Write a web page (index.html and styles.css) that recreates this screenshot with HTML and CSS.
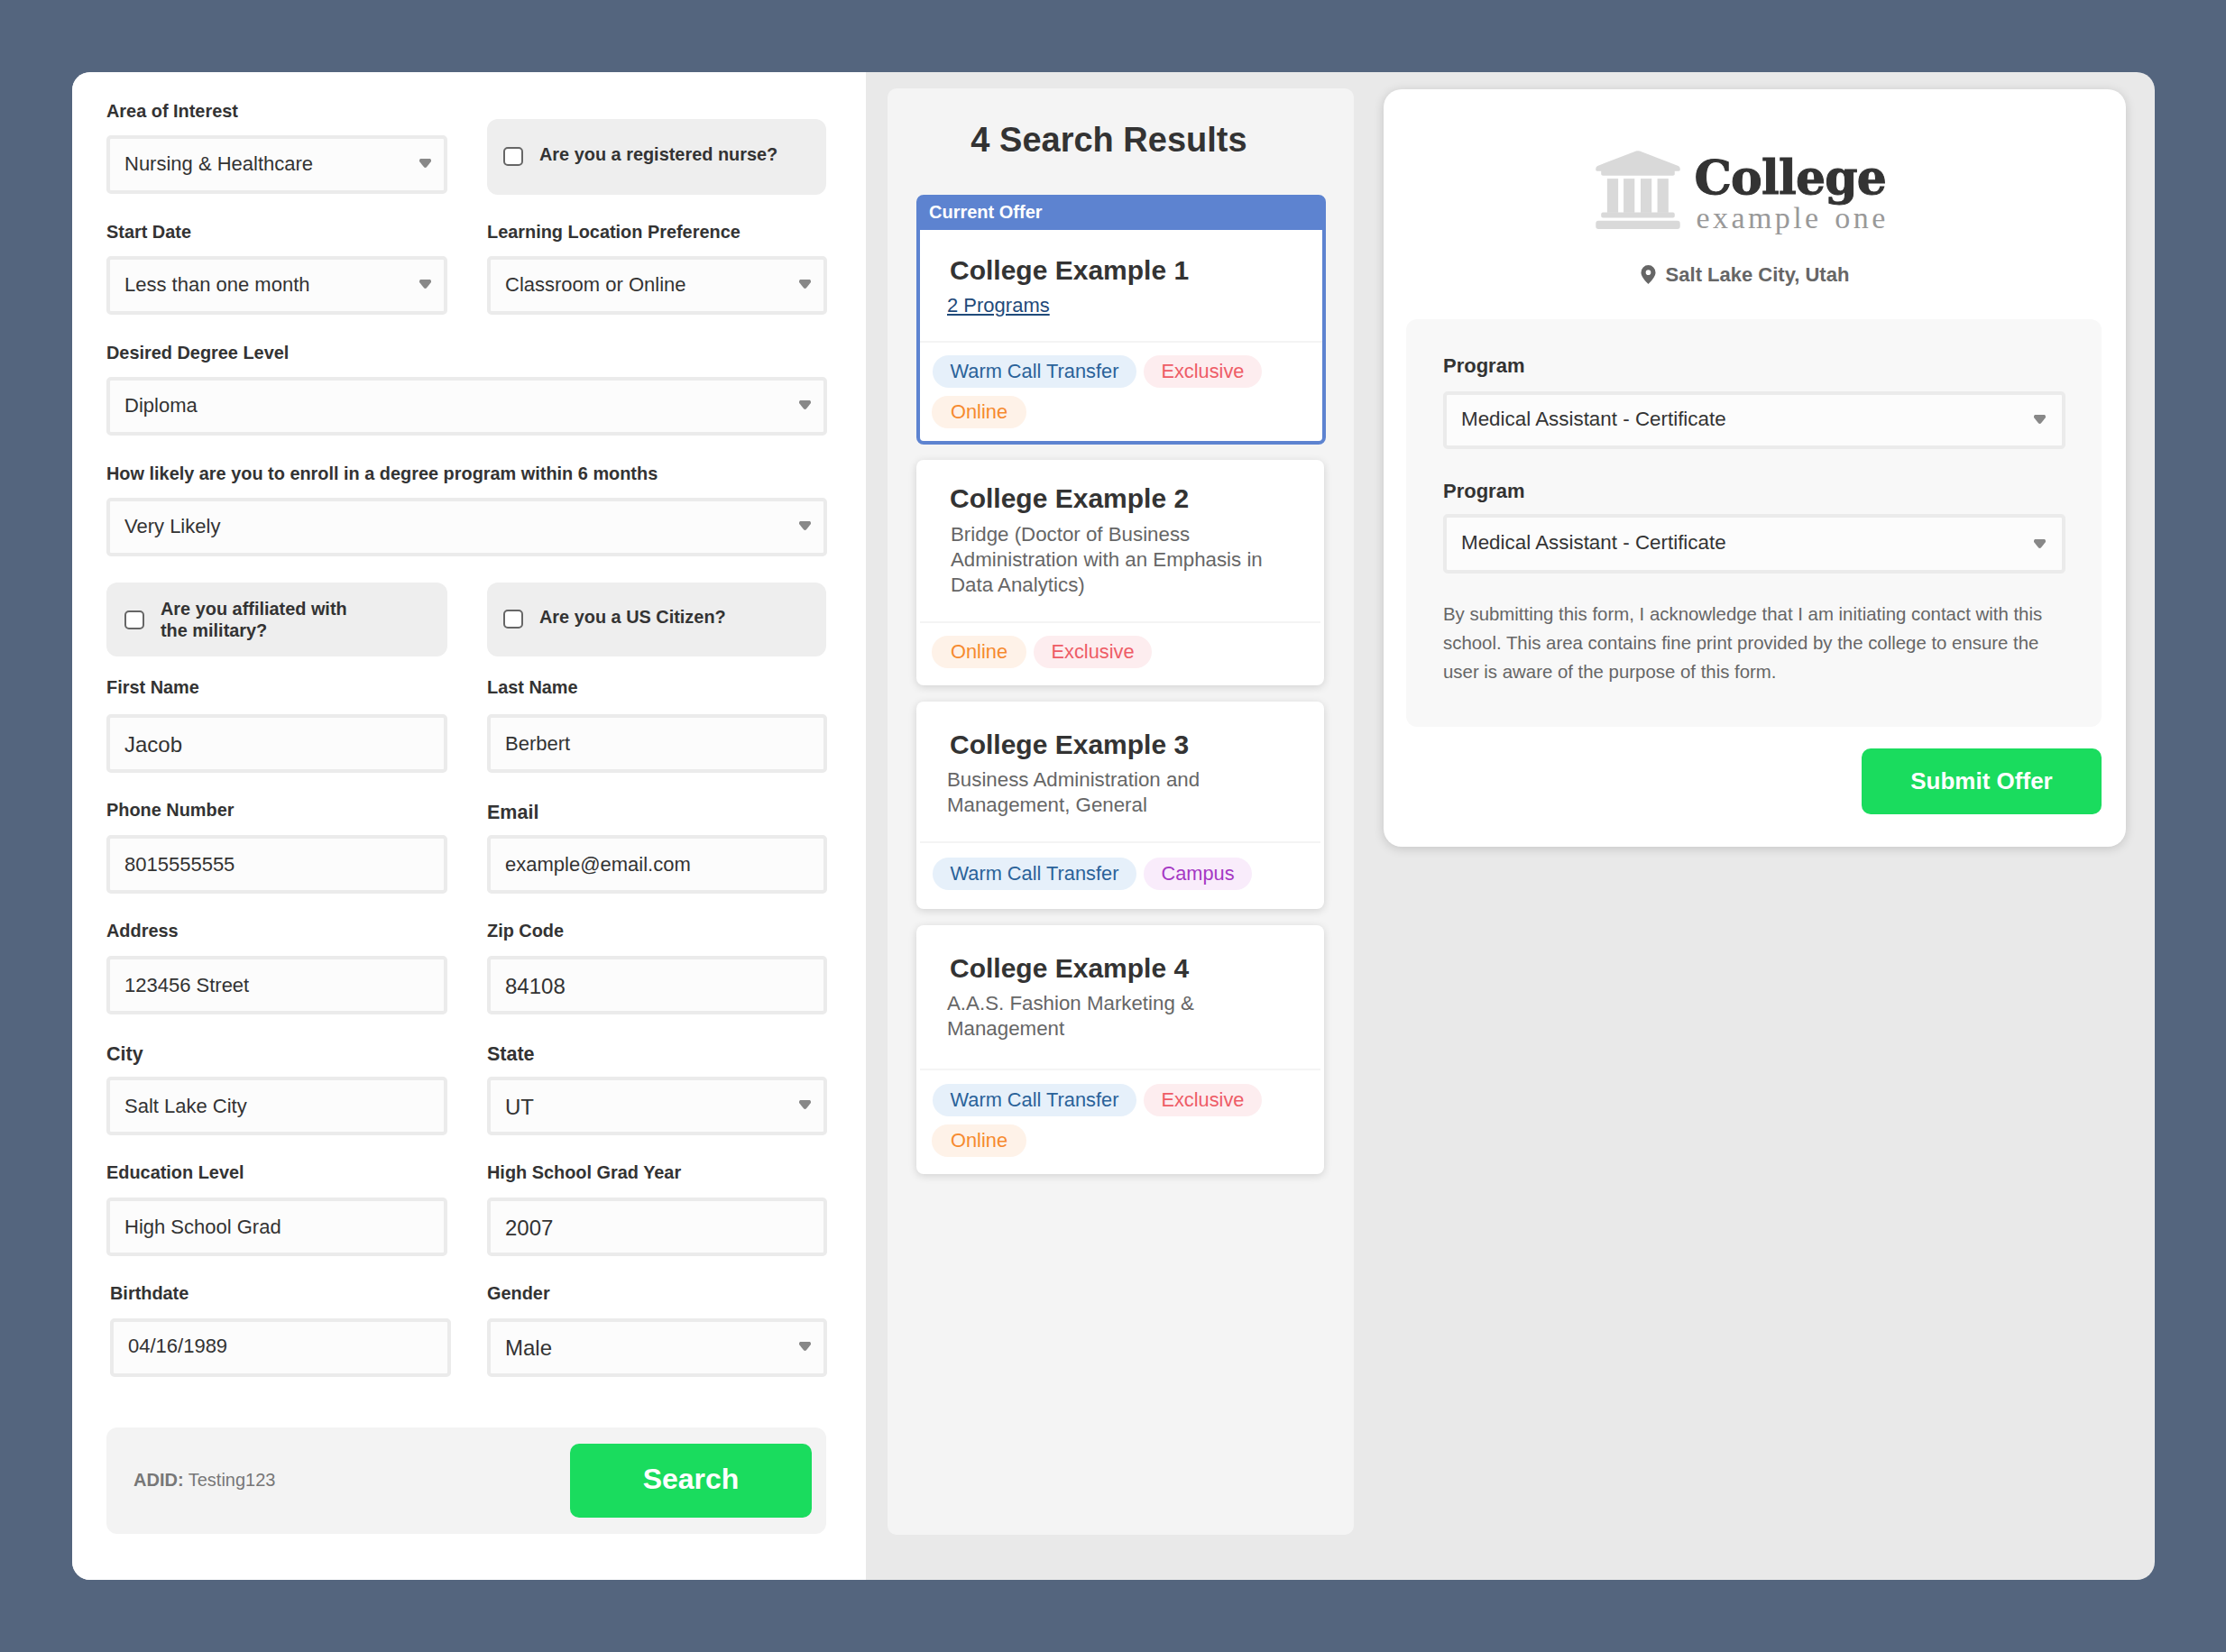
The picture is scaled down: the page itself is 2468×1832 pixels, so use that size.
FILE: index.html
```html
<!DOCTYPE html>
<html lang="en">
<head>
    <meta charset="UTF-8">
    <title>Search Results</title>
    <link rel="stylesheet" href="styles.css">
</head>
<body>
    <div class="panel">
        <form class="leadForm">
            <div class="formGrid">
                <div class="field topRow">
                    <label>Area of Interest</label>
                    <div class="selectWrap"><select><option>Nursing &amp; Healthcare</option></select></div>
                </div>
                <div class="checkBox checkRight checkBoxTop singleLine">
                    <input type="checkbox" id="nurse">
                    <label for="nurse">Are you a registered nurse?</label>
                </div>

                <div class="field topRow">
                    <label>Start Date</label>
                    <div class="selectWrap"><select><option>Less than one month</option></select></div>
                </div>
                <div class="field topRow">
                    <label>Learning Location Preference</label>
                    <div class="selectWrap"><select><option>Classroom or Online</option></select></div>
                </div>

                <div class="field topRow wide">
                    <label>Desired Degree Level</label>
                    <div class="selectWrap"><select><option>Diploma</option></select></div>
                </div>

                <div class="field topRow wide">
                    <label>How likely are you to enroll in a degree program within 6 months</label>
                    <div class="selectWrap"><select><option>Very Likely</option></select></div>
                </div>

                <div class="checkBox checkLeft">
                    <input type="checkbox" id="military">
                    <label for="military">Are you affiliated with<br>the military?</label>
                </div>
                <div class="checkBox checkRight singleLine">
                    <input type="checkbox" id="citizen">
                    <label for="citizen">Are you a US Citizen?</label>
                </div>

                <div class="field nameRow">
                    <label>First Name</label>
                    <input type="text" class="large" value="Jacob">
                </div>
                <div class="field nameRow">
                    <label>Last Name</label>
                    <input type="text" value="Berbert">
                </div>

                <div class="field">
                    <label>Phone Number</label>
                    <input type="text" value="8015555555">
                </div>
                <div class="field">
                    <label class="bigLabel">Email</label>
                    <input type="text" value="example@email.com">
                </div>

                <div class="field">
                    <label>Address</label>
                    <input type="text" value="123456 Street">
                </div>
                <div class="field">
                    <label>Zip Code</label>
                    <input type="text" class="large" value="84108">
                </div>

                <div class="field">
                    <label class="bigLabel">City</label>
                    <input type="text" value="Salt Lake City">
                </div>
                <div class="field">
                    <label class="bigLabel">State</label>
                    <div class="selectWrap"><select class="large"><option>UT</option></select></div>
                </div>

                <div class="field">
                    <label>Education Level</label>
                    <input type="text" value="High School Grad">
                </div>
                <div class="field">
                    <label>High School Grad Year</label>
                    <input type="text" class="large" value="2007">
                </div>

                <div class="field birthdate">
                    <label>Birthdate</label>
                    <input type="text" value="04/16/1989">
                </div>
                <div class="field genderField">
                    <label>Gender</label>
                    <div class="selectWrap"><select class="large"><option>Male</option></select></div>
                </div>
            </div>

            <div class="searchBar">
                <p class="adid"><b>ADID:</b> Testing123</p>
                <button type="button" class="greenBtn searchBtn">Search</button>
            </div>
        </form>

        <div class="resultsArea">
            <div class="results">
                <h2>4 Search Results</h2>

                <div class="card current">
                    <div class="currentBar">Current Offer</div>
                    <div class="cardBody">
                        <h3>College Example 1</h3>
                        <a href="#" class="programs">2 Programs</a>
                    </div>
                    <div class="tags">
                        <span class="tag blue">Warm Call Transfer</span>
                        <span class="tag red">Exclusive</span>
                        <span class="tag orange">Online</span>
                    </div>
                </div>

                <div class="card">
                    <div class="cardBody">
                        <h3>College Example 2</h3>
                        <p>Bridge (Doctor of Business Administration with an Emphasis in Data Analytics)</p>
                    </div>
                    <div class="tags">
                        <span class="tag orange">Online</span>
                        <span class="tag red">Exclusive</span>
                    </div>
                </div>

                <div class="card cardTall">
                    <div class="cardBody">
                        <h3>College Example 3</h3>
                        <p>Business Administration and<br>Management, General</p>
                    </div>
                    <div class="tags">
                        <span class="tag blue">Warm Call Transfer</span>
                        <span class="tag purple">Campus</span>
                    </div>
                </div>

                <div class="card cardTall">
                    <div class="cardBody">
                        <h3>College Example 4</h3>
                        <p>A.A.S. Fashion Marketing &amp;<br>Management</p>
                    </div>
                    <div class="tags">
                        <span class="tag blue">Warm Call Transfer</span>
                        <span class="tag red">Exclusive</span>
                        <span class="tag orange">Online</span>
                    </div>
                </div>
            </div>

            <div class="offer">
                <div class="logo">
                    <svg class="logoIcon" viewBox="0 0 94 87.500" width="94" height="87">
                        <path d="M45 .5 Q47 0 49 .5 L92 17 Q94 18 94 20 L94 21.500 Q94 23 92 23 L88 23 L88 26.500 Q88 28 86 28 L8 28 Q6 28 6 26.500 L6 23 L2 23 Q0 23 0 21.500 L0 20 Q0 18 2 17 Z" fill="#d9d9d9"/>
                        <rect x="12.700" y="31.300" width="12.300" height="38" fill="#d9d9d9"/>
                        <rect x="31" y="31.300" width="12.300" height="38" fill="#d9d9d9"/>
                        <rect x="50" y="31.300" width="12.300" height="38" fill="#d9d9d9"/>
                        <rect x="68.700" y="31.300" width="12.300" height="38" fill="#d9d9d9"/>
                        <rect x="6" y="69" width="82" height="6" rx="2" fill="#d9d9d9"/>
                        <rect x="0" y="78.300" width="94" height="9.200" rx="3" fill="#d9d9d9"/>
                    </svg>
                    <div class="logoText">
                        <div class="logoName">College</div>
                        <div class="logoSub">example one</div>
                    </div>
                </div>
                <div class="location">
                    <svg viewBox="0 0 18 22" width="17" height="21">
                        <path fill-rule="evenodd" d="M9 0a8.500 8.500 0 0 1 8.500 8.500C17.500 13.500 12 19 9 22 6 19 .5 13.500 .5 8.500A8.500 8.500 0 0 1 9 0Zm0 5.500a3 3 0 1 0 0 6 3 3 0 0 0 0-6Z" fill="#666"/>
                    </svg>
                    <span>Salt Lake City, Utah</span>
                </div>
                <div class="offerForm">
                    <label>Program</label>
                    <div class="selectWrap"><select><option>Medical Assistant - Certificate</option></select></div>
                    <label class="secondLabel">Program</label>
                    <div class="selectWrap secondProgram"><select><option>Medical Assistant - Certificate</option></select></div>
                    <p class="finePrint">By submitting this form, I acknowledge that I am initiating contact with this school. This area contains fine print provided by the college to ensure the user is aware of the purpose of this form.</p>
                </div>
                <div class="offerActions">
                    <button type="button" class="greenBtn submitBtn">Submit Offer</button>
                </div>
            </div>
        </div>
    </div>
</body>
</html>
```

FILE: styles.css
```css
* {
    box-sizing: border-box;
}

body {
    margin: 0;
    padding: 80px 79px 0 80px;
    min-height: 100vh;
    background-color: #54657e;
    font-family: "Liberation Sans", Arial, sans-serif;
    color: #333;
}

.panel {
    display: flex;
    height: 1672px;
    border-radius: 20px;
    overflow: hidden;
    background-color: #e9e9e9;
}

/* Left form */
.leadForm {
    width: 880px;
    flex-shrink: 0;
    padding: 30px 43px 0 38px;
    background-color: #fff;
}

.formGrid {
    display: grid;
    grid-template-columns: 378px 377px;
    column-gap: 44px;
    row-gap: 0;
}

.field {
    height: 134px;
}

.wide {
    grid-column: span 2;
}

.field label {
    display: block;
    height: 40px;
    font-size: 19.9px;
    line-height: 24px;
    font-weight: bold;
    color: #333;
}

.topRow label {
    padding-top: 1px;
}

.nameRow label {
    height: 42px;
    margin-top: -2px;
}

.field .bigLabel {
    padding-top: 3px;
    font-size: 21.5px;
}

input[type="text"], select {
    display: block;
    width: 100%;
    height: 65px;
    padding: 0 16px;
    border: 4px solid #ebebeb;
    border-radius: 5px;
    background-color: #fcfcfc;
    font-family: inherit;
    font-size: 22px;
    color: #333;
    appearance: none;
    outline: none;
}

.topRow select, .offerForm select, .birthdate input[type="text"] {
    padding-bottom: 3px;
}

input[type="text"].large, select.large {
    padding-top: 2px;
    font-size: 24px;
}

.genderField select.large {
    padding-top: 0;
}

.selectWrap {
    position: relative;
}

.selectWrap::after {
    content: "";
    position: absolute;
    right: 18px;
    top: 26px;
    width: 13px;
    height: 10px;
    background-color: #888;
    clip-path: polygon(8% 0, 92% 0, 100% 12%, 100% 30%, 60% 96%, 50% 100%, 40% 96%, 0 30%, 0 12%);
    pointer-events: none;
}

.birthdate {
    padding-left: 4px;
    margin-right: -4px;
}

.checkBox {
    display: flex;
    align-items: center;
    gap: 18px;
    height: 82px;
    margin-bottom: 24px;
    border-radius: 12px;
    background-color: #eee;
}

.checkLeft {
    padding: 0 20px;
}

.checkRight {
    width: 376px;
    padding: 0 18px;
}

.checkBoxTop {
    height: 84px;
    margin-top: 22px;
    margin-bottom: 0;
}

.checkBox input {
    width: 22px;
    height: 21px;
    margin: 0;
    flex-shrink: 0;
    appearance: none;
    border: 2px solid #666;
    border-radius: 5px;
    background-color: #fff;
}

.checkBox label {
    font-size: 19.9px;
    line-height: 24px;
    font-weight: bold;
}

.singleLine input {
    margin-bottom: 2px;
}

.singleLine label {
    padding-bottom: 6px;
}

.searchBar {
    display: flex;
    align-items: center;
    justify-content: space-between;
    width: 798px;
    height: 118px;
    margin-top: 27px;
    padding: 0 16px 1px 30px;
    border-radius: 12px;
    background-color: #f3f3f3;
}

.adid {
    margin: 0;
    font-size: 20px;
    color: #777;
}

.greenBtn {
    border: none;
    border-radius: 10px;
    background-color: #1adc5e;
    color: #fff;
    font-family: inherit;
    font-weight: bold;
}

.searchBtn {
    width: 268px;
    height: 82px;
    padding-bottom: 4px;
    font-size: 32px;
}

/* Results */
.resultsArea {
    flex-grow: 1;
    display: flex;
    align-items: flex-start;
    padding: 18px 31px 50px 24px;
    gap: 33px;
    height: 100%;
}

.results {
    width: 517px;
    height: 100%;
    flex-shrink: 0;
    padding: 0 33px 0 32px;
    border-radius: 10px;
    background-color: #f4f4f4;
}

.results h2 {
    margin: 33px 0 37px;
    padding-right: 25px;
    font-size: 38px;
    line-height: 48px;
    text-align: center;
    color: #333;
}

.card {
    margin-bottom: 17px;
    padding: 0 4px;
    border-radius: 8px;
    background-color: #fff;
    box-shadow: 0 2px 10px rgba(0, 0, 0, 0.14);
}

.current {
    margin-right: -2px;
    padding: 0;
    border: 4px solid #5d83d0;
    box-shadow: none;
}

.currentBar {
    height: 36px;
    margin: -1px -1px 0;
    padding-left: 11px;
    background-color: #5d83d0;
    color: #fff;
    font-size: 20px;
    line-height: 33px;
    font-weight: bold;
}

.cardBody {
    padding: 25px 20px 26px 33px;
    border-bottom: 2px solid #f4f4f4;
}

.current .cardBody {
    padding-top: 27px;
    padding-bottom: 26px;
}

.cardBody h3 {
    margin: 0 0 8px;
    font-size: 30px;
    line-height: 36px;
    color: #333;
}

.cardBody p {
    margin: 0 0 0 1px;
    font-size: 22.3px;
    line-height: 28px;
    color: #666;
}

.cardTall {
    margin-top: 18px;
}

.cardTall .cardBody {
    padding-top: 30px;
    padding-bottom: 26px;
}

.cardTall h3 {
    margin-bottom: 7px;
}

.cardTall p {
    margin-left: -3px;
}

.cardTall:last-child .cardBody {
    padding-bottom: 30px;
}

.programs {
    display: block;
    margin-left: -3px;
    font-size: 22px;
    line-height: 26px;
    color: #1f4a7a;
}

.tags {
    display: flex;
    flex-wrap: wrap;
    gap: 9px 8px;
    padding: 14px 13px 19px;
}

.current .tags {
    padding-bottom: 14px;
}

.cardTall .tags {
    padding-top: 16px;
    padding-bottom: 21px;
}

.cardTall:last-child .tags {
    padding-top: 15px;
    padding-bottom: 19px;
}

.tag {
    height: 36px;
    padding: 0 19.500px;
    border-radius: 18px;
    font-size: 21.8px;
    line-height: 36px;
}

.blue {
    margin-left: 1px;
    background-color: #e6f0fa;
    color: #2a6299;
}

.red {
    background-color: #fdedef;
    color: #ee5c66;
}

.orange {
    padding: 0 21px;
    background-color: #fef2e8;
    color: #f68a2f;
}

.purple {
    background-color: #f9ecfb;
    color: #a538c4;
}

/* Offer */
.offer {
    width: 823px;
    margin-top: 1px;
    padding: 0 27px 36px 25px;
    border-radius: 20px;
    background-color: #fff;
    box-shadow: 0 2px 12px rgba(0, 0, 0, 0.16);
}

.logo {
    display: flex;
    justify-content: center;
    align-items: flex-start;
    gap: 16px;
    padding: 68px 28px 0 0;
}

.logoText {
    width: 214px;
}

.logoName {
    margin-top: 4px;
    font-family: "DejaVu Serif", serif;
    font-size: 52px;
    line-height: 52px;
    font-weight: bold;
    letter-spacing: -0.8px;
    color: #333;
    -webkit-text-stroke: 1px #333;
}

.logoSub {
    margin-left: 2px;
    font-family: "Liberation Serif", serif;
    font-size: 34px;
    line-height: 38px;
    letter-spacing: 3.4px;
    word-spacing: 3px;
    white-space: nowrap;
    color: #999;
}

.location {
    display: flex;
    justify-content: center;
    align-items: center;
    gap: 11px;
    height: 25px;
    margin-top: 31px;
    padding-right: 20px;
    font-size: 22px;
    font-weight: bold;
    color: #666;
}

.offerForm {
    margin-top: 37px;
    padding: 39px 40px 45px 41px;
    border-radius: 12px;
    background-color: #f8f8f8;
}

.offerForm label {
    display: block;
    height: 41px;
    font-size: 22px;
    line-height: 26px;
    font-weight: bold;
}

.offerForm .secondLabel {
    height: 38px;
}

.offerForm select {
    height: 64px;
    font-size: 22.4px;
}

.offerForm .selectWrap {
    margin-bottom: 34px;
}

.offerForm .selectWrap::after {
    right: 22px;
}

.offerForm .secondProgram {
    margin-bottom: 29px;
}

.offerForm .secondProgram select {
    height: 66px;
}

.offerForm .secondProgram::after {
    top: 28px;
}

.finePrint {
    margin: 0;
    font-size: 20.4px;
    line-height: 32px;
    color: #666;
}

.offerActions {
    display: flex;
    justify-content: flex-end;
    margin-top: 24px;
}

.submitBtn {
    width: 266px;
    height: 73px;
    padding-bottom: 2px;
    font-size: 26px;
}
```
